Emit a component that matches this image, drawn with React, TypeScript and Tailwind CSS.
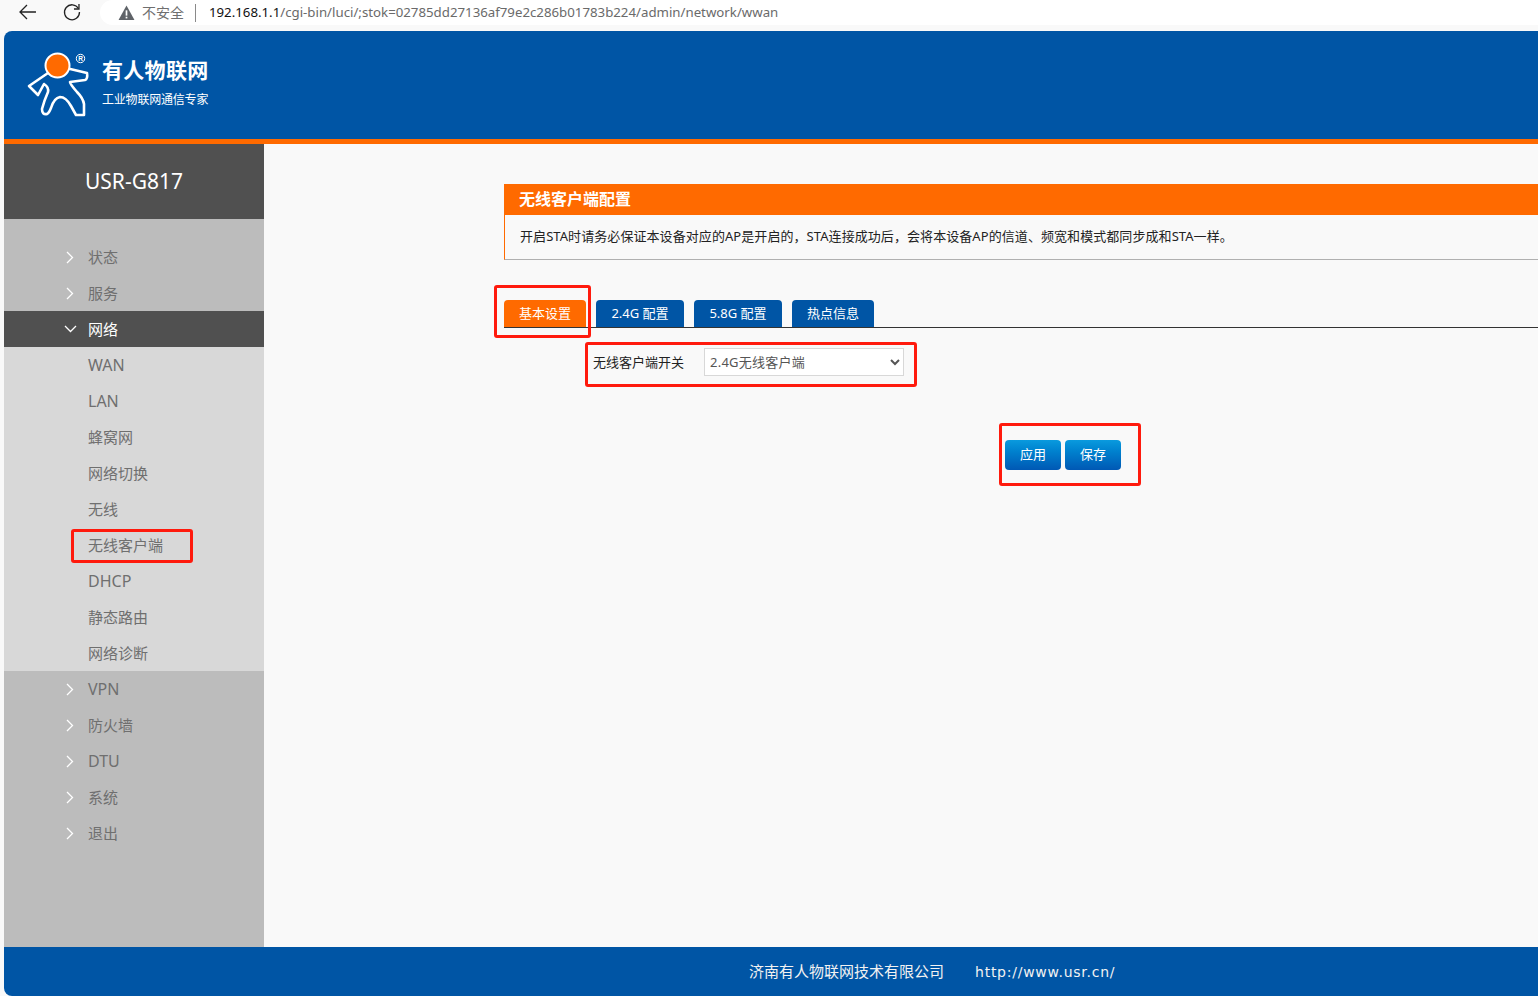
const cjk = "font-['Noto_Sans','Noto_Sans_CJK_SC',sans-serif]"

const topBefore = ["状态", "服务"]
const subItems = ["WAN", "LAN", "蜂窝网", "网络切换", "无线", "无线客户端", "DHCP", "静态路由", "网络诊断"]
const topAfter = ["VPN", "防火墙", "DTU", "系统", "退出"]

function Logo() {
  return (
    <svg width="66" height="70" viewBox="25 50 66 70" className="shrink-0">
      <path
        d="M47 73 L28 86 L37 95 L43 84 Q48 87 47 92 Q43 101 41 109 Q41 115 46 114 Q48 113 50 108 Q53 98 59 97 Q65 97 70 106 L75 115 L83 115 L83 104 Q82 98 76 92 Q69 84 69 82 L84 80 Q87 79 86 73 L65 68 Z"
        fill="none"
        stroke="#fff"
        strokeWidth="2.6"
        strokeLinejoin="round"
      />
      <circle cx="56.5" cy="65.5" r="12" fill="#ff6a00" stroke="#fff" strokeWidth="2" />
      <circle cx="79.5" cy="58.5" r="4.2" fill="none" stroke="#fff" strokeWidth="1" />
      <text x="79.5" y="61" textAnchor="middle" fontSize="6.5" fontWeight="700" fill="#fff" fontFamily="Liberation Sans">R</text>
    </svg>
  )
}

function MenuItem({ label }: { label: string }) {
  return (
    <div className={`h-9 flex items-center text-[#6f6f6f] ${/^[A-Z]+$/.test(label) ? "text-[16px]" : "text-[15px]"}`}>
      <svg width="8" height="13" viewBox="0 0 8 13" className="ml-[62px] mr-[14px] shrink-0" fill="none" stroke="#fff" strokeWidth="1.3">
        <path d="M1 1 L6.5 6.5 L1 12" />
      </svg>
      <span>{label}</span>
    </div>
  )
}

function Tab({ label, active, wide }: { label: string; active?: boolean; wide?: boolean }) {
  return (
    <div className={`h-[27px] flex items-center justify-center text-white text-[13px] rounded-t-[4px] ${wide ? "w-[88px]" : "w-[82px]"} ${active ? "bg-[#ff6a00]" : "bg-[#0055a5]"}`}>
      {label}
    </div>
  )
}

function Btn({ label }: { label: string }) {
  return (
    <button className="w-14 h-[30px] rounded-[4px] text-white text-[13px] bg-gradient-to-b from-[#0a9ade] to-[#0058b4]">
      {label}
    </button>
  )
}

export default function App() {
  return (
    <div className={`relative w-[1538px] h-[996px] overflow-hidden bg-[#f9f9f9] ${cjk}`}>
      {/* browser bar */}
      <div className="h-[31px] flex items-start text-[#1f1f1f]">
        <svg width="20" height="20" viewBox="0 0 20 20" className="ml-[18px] mt-[2px]" fill="none" stroke="#222" strokeWidth="1.3">
          <path d="M18 10 H2 M9 3 L2 10 L9 17" />
        </svg>
        <svg width="20" height="20" viewBox="0 0 20 20" className="ml-[24px] mt-[2px]" fill="none" stroke="#222" strokeWidth="1.3">
          <path d="M16.5 6.5 A7.5 7.5 0 1 0 17.5 10" />
          <path d="M17 2 V7 H12" />
        </svg>
        <div className="ml-[18px] w-[1440px] h-[25px] mb-[2px] bg-white rounded-l-[14px] flex items-center pl-[18px]">
          <svg width="17" height="16" viewBox="0 0 16 15" className="mr-[7px]">
            <path d="M8 0.5 L15.5 14 H0.5 Z" fill="#5f6368" />
            <rect x="7.2" y="5" width="1.6" height="5" fill="#fff" />
            <rect x="7.2" y="11" width="1.6" height="1.6" fill="#fff" />
          </svg>
          <span className="text-[#6f6f6f] text-[14px]">不安全</span>
          <span className="w-px h-[18px] bg-[#8a8a8a] ml-[11px] mr-[13px]" />
          <span className="text-[#111] text-[13.25px]">192.168.1.1</span>
          <span className="text-[#6a6a6a] text-[13.25px]">/cgi-bin/luci/;stok=02785dd27136af79e2c286b01783b224/admin/network/wwan</span>
        </div>
      </div>

      <div className="ml-1 h-[965px] flex flex-col rounded-l-lg overflow-hidden">
        {/* header */}
        <div className="h-[108px] bg-[#0055a5] flex items-start pl-[22px] pt-[19px] text-white shrink-0">
          <Logo />
          <div className="ml-[10px]">
            <div className="text-[21px] leading-[26px] font-bold tracking-[0.3px] mt-[7px]">有人物联网</div>
            <div className="text-[12px] leading-[16px] mt-[9px] tracking-[-0.2px]">工业物联网通信专家</div>
          </div>
        </div>
        <div className="h-[5px] bg-[#ff6a00] shrink-0" />

        {/* body */}
        <div className="flex flex-1 min-h-0">
          <aside className="w-[260px] flex flex-col bg-[#bcbcbc]">
            <div className="h-[75px] bg-[#505050] text-white text-[21px] flex items-center justify-center">USR-G817</div>
            <div className="pt-5">
              {topBefore.map((m) => (
                <MenuItem key={m} label={m} />
              ))}
              <div className="h-9 flex items-center bg-[#505050] text-white text-[15px]">
                <svg width="13" height="8" viewBox="0 0 13 8" className="ml-[60px] mr-[11px] shrink-0" fill="none" stroke="#fff" strokeWidth="1.3">
                  <path d="M1 1 L6.5 6.5 L12 1" />
                </svg>
                <span>网络</span>
              </div>
              <div className="bg-[#d8d8d8]">
                {subItems.map((m) => (
                  <div key={m} className={`h-9 flex items-center pl-[84px] text-[#6f6f6f] ${/^[A-Z]+$/.test(m) ? "text-[16px]" : "text-[15px]"}`}>
                    {m}
                  </div>
                ))}
              </div>
              {topAfter.map((m) => (
                <MenuItem key={m} label={m} />
              ))}
            </div>
          </aside>

          <main className="flex-1 pl-[240px] pt-10 min-w-0">
            <div className="bg-[#ff6a00] h-[31px] flex items-center pl-[15px] pb-[2px] text-white text-[16px] font-bold">无线客户端配置</div>
            <div className="h-[45px] border-l border-b border-l-[#ff6a00] border-b-[#b0b0b0] flex items-center pl-[15px] text-[13px] text-[#222] tracking-[0.07px]">
              开启STA时请务必保证本设备对应的AP是开启的，STA连接成功后，会将本设备AP的信道、频宽和模式都同步成和STA一样。
            </div>

            <div className="mt-10 flex gap-[10px] border-b border-[#333]">
              <Tab label="基本设置" active />
              <Tab label="2.4G 配置" wide />
              <Tab label="5.8G 配置" wide />
              <Tab label="热点信息" />
            </div>

            <div className="mt-[20px] ml-[89px] flex items-center">
              <label className="w-[111px] mt-px text-[13px] text-[#222]">无线客户端开关</label>
              <select className="w-[200px] h-[28px] pl-px bg-white border border-[#d8d8d8] text-[13px] text-[#555] tracking-[0.25px]">
                <option>2.4G无线客户端</option>
              </select>
            </div>

            <div className="mt-[64px] ml-[501px] flex gap-1">
              <Btn label="应用" />
              <Btn label="保存" />
            </div>
          </main>
        </div>

        {/* footer */}
        <div className="h-[49px] bg-[#0055a5] shrink-0 flex items-center pl-[745px] text-[#f2f2f2] text-[15px]">
          <span>济南有人物联网技术有限公司</span>
          <span className="ml-[31px] mt-px font-['DejaVu_Sans',sans-serif] text-[14px] tracking-[0.75px]">http://www.usr.cn/</span>
        </div>
      </div>

      {/* red annotation boxes drawn over the screenshot */}
      <div className="absolute left-[494px] top-[285px] w-[97px] h-[53px] border-[3px] border-[#ff1a0d] rounded-[3px]" />
      <div className="absolute left-[585px] top-[342px] w-[332px] h-[45px] border-[3px] border-[#ff1a0d] rounded-[3px]" />
      <div className="absolute left-[999px] top-[423px] w-[142px] h-[63px] border-[3px] border-[#ff1a0d] rounded-[3px]" />
      <div className="absolute left-[71px] top-[529px] w-[122px] h-[34px] border-[3px] border-[#ff1a0d] rounded-[3px]" />
    </div>
  )
}
